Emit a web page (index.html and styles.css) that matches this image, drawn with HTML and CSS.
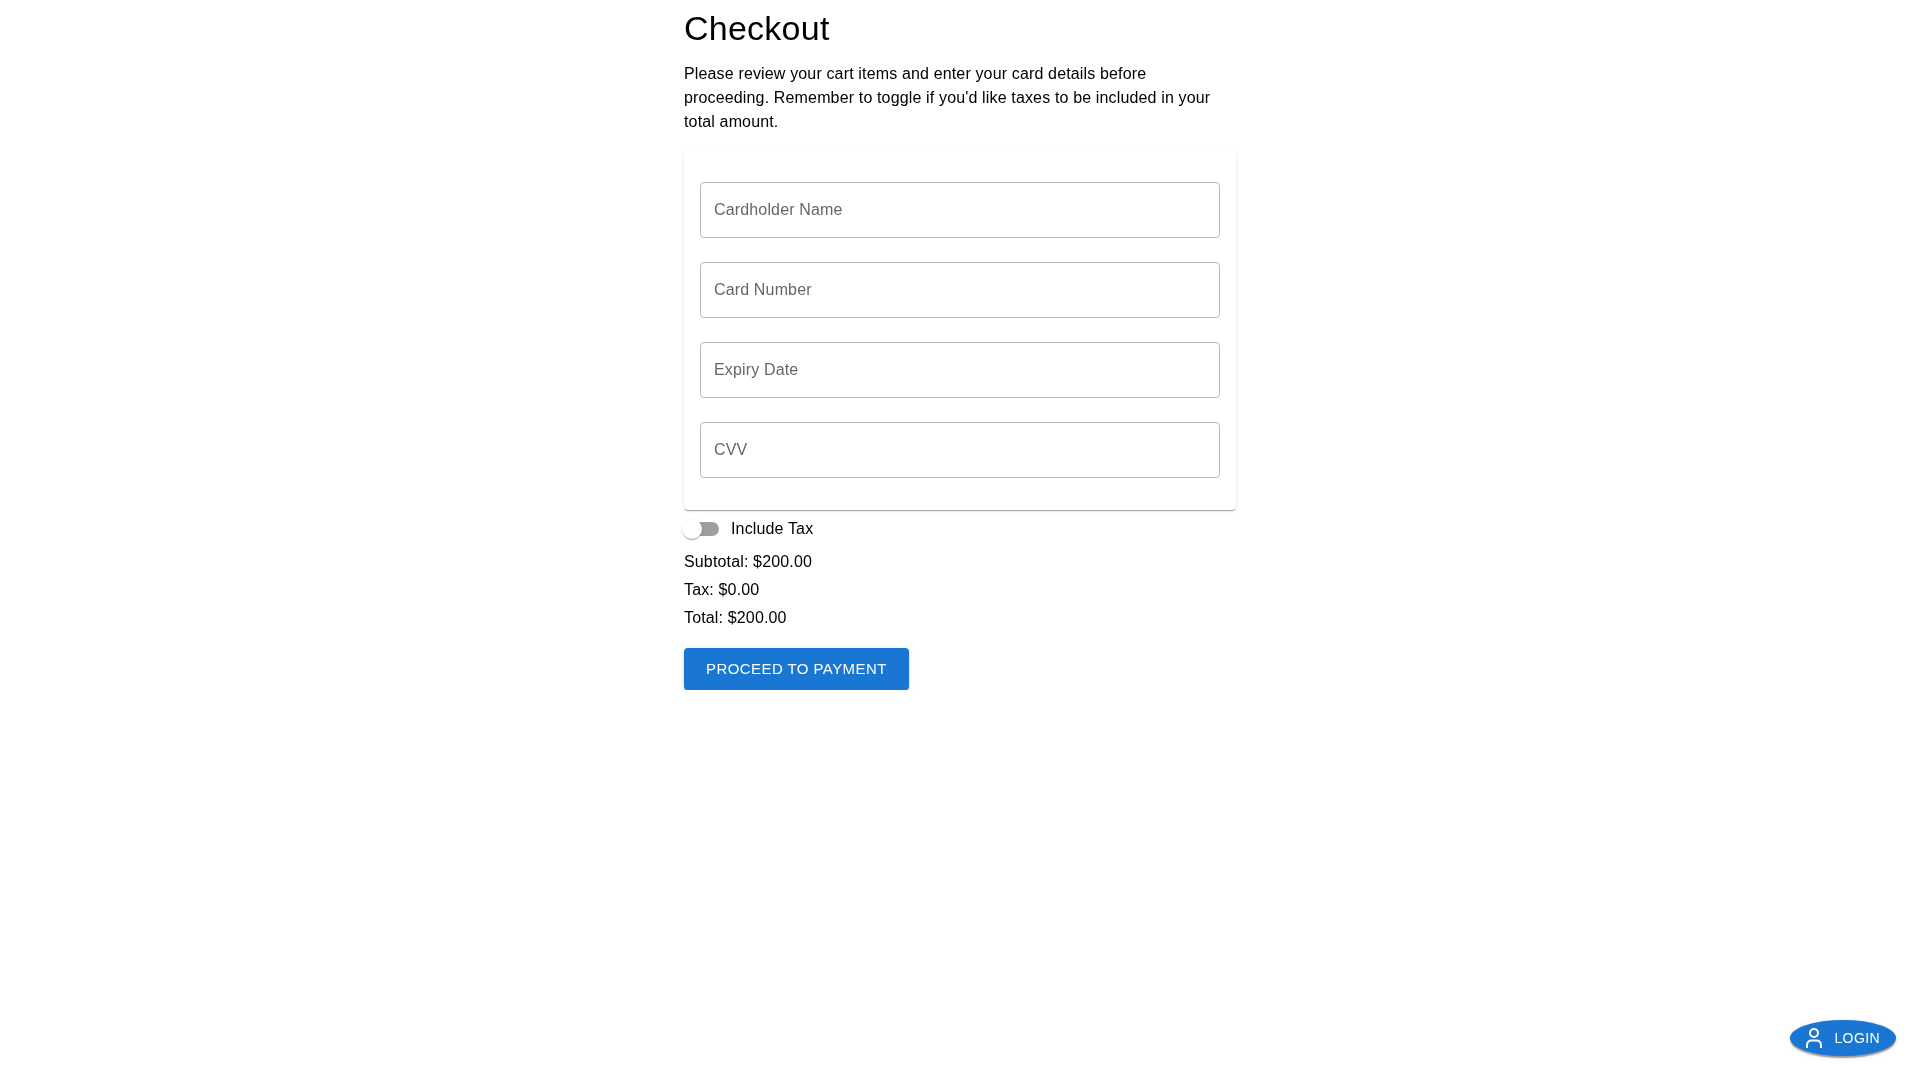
FILE: index.html
```html
<!DOCTYPE html>
<html lang="en">
<head>
  <meta charset="UTF-8">
  <meta name="viewport" content="width=device-width, initial-scale=1.0">
  <title>Checkout</title>
  <link rel="stylesheet" href="styles.css">
</head>
<body>
  <main class="container">
    <h1>Checkout</h1>
    <p class="intro">Please review your cart items and enter your card details before proceeding. Remember to toggle if you'd like taxes to be included in your total amount.</p>

    <!-- Card form -->
    <form class="card-form">
      <input class="field" type="text" placeholder="Cardholder Name">
      <input class="field" type="text" placeholder="Card Number">
      <input class="field" type="text" placeholder="Expiry Date">
      <input class="field" type="text" placeholder="CVV">
    </form>

    <label class="tax-toggle">
      <span class="switch">
        <span class="switch-track"></span>
        <span class="switch-thumb"></span>
      </span>
      Include Tax
    </label>

    <div class="amounts">
      <p class="amount">Subtotal: $200.00</p>
      <p class="amount">Tax: $0.00</p>
      <p class="amount">Total: $200.00</p>
    </div>

    <button class="pay-btn" type="button">Proceed to Payment</button>
  </main>

  <!-- Floating login button -->
  <button class="login-btn" type="button">
    <svg class="login-icon" viewBox="0 0 24 24" fill="none" stroke="currentColor" stroke-width="2">
      <circle cx="12" cy="7" r="4"/>
      <path d="M5 22v-3c0-2.800 2-4.500 4.500-4.500h5c2.500 0 4.500 1.700 4.500 4.500v3"/>
    </svg>
    Login
  </button>
</body>
</html>
```

FILE: styles.css
```css
body {
  margin: 0;
  background-color: #fff;
  color: #000;
  font-family: "Liberation Sans", Arial, sans-serif;
  font-size: 16px;
  line-height: 1.5;
  letter-spacing: 0.15px;
  -webkit-font-smoothing: antialiased;
}
.container {
  width: 552px;
  margin: 0 auto;
  padding-top: 7px;
  will-change: opacity;
}
h1 {
  margin: 0 0 13px;
  font-size: 34px;
  font-weight: 400;
  line-height: 42px;
  letter-spacing: 0.25px;
}
.intro {
  margin: 0 0 16px;
}
.card-form {
  display: flex;
  flex-direction: column;
  gap: 24px;
  padding: 32px 16px;
  border-radius: 4px;
  background-color: #fff;
  box-shadow: 0 2px 1px -1px rgba(0,0,0,0.2), 0 1px 1px 0 rgba(0,0,0,0.14), 0 1px 3px 0 rgba(0,0,0,0.12);
}
.field {
  height: 56px;
  box-sizing: border-box;
  padding: 0 13px;
  border: 1px solid #bbb;
  border-radius: 4px;
  font-family: inherit;
  font-size: 16px;
  letter-spacing: 0.15px;
  color: #000;
}
.field::placeholder {
  color: #666;
  opacity: 1;
}
.tax-toggle {
  display: flex;
  align-items: center;
  height: 38px;
}
.switch {
  position: relative;
  flex: none;
  width: 47px;
  height: 38px;
}
.switch-track {
  position: absolute;
  top: 12px;
  left: 1px;
  width: 34px;
  height: 14px;
  border-radius: 7px;
  background-color: #9e9e9e;
}
.switch-thumb {
  position: absolute;
  top: 9px;
  left: -2px;
  width: 20px;
  height: 20px;
  border-radius: 50%;
  background-color: #fff;
  box-shadow: 0 2px 1px -1px rgba(0,0,0,0.2), 0 1px 1px 0 rgba(0,0,0,0.14), 0 1px 3px 0 rgba(0,0,0,0.12);
}
.amounts {
  display: flex;
  flex-direction: column;
  gap: 4px;
  padding-top: 2px;
}
.amount {
  margin: 0;
}
.pay-btn {
  display: block;
  margin-top: 18px;
  padding: 8px 22px;
  border: none;
  border-radius: 4px;
  background-color: #1976d2;
  color: #fff;
  font-family: inherit;
  font-size: 15px;
  line-height: 26.25px;
  letter-spacing: 0.43px;
  text-transform: uppercase;
  box-shadow: 0 3px 1px -1px rgba(0,0,0,0.25), 0 2px 2px 0 rgba(0,0,0,0.14), 0 1px 5px 0 rgba(0,0,0,0.12);
}
.login-btn {
  position: fixed;
  right: 24px;
  bottom: 24px;
  display: flex;
  align-items: center;
  gap: 8px;
  height: 36px;
  padding: 0 16px 0 12px;
  border: none;
  border-radius: 50%;
  background-color: #1976d2;
  color: #fff;
  font-family: inherit;
  font-size: 14px;
  letter-spacing: 0.4px;
  text-transform: uppercase;
  will-change: opacity;
  box-shadow: 0 3px 1px -1px rgba(0,0,0,0.25), 0 2px 2px 0 rgba(0,0,0,0.14), 0 1px 5px 0 rgba(0,0,0,0.12);
}
.login-icon {
  width: 24px;
  height: 24px;
}
```
